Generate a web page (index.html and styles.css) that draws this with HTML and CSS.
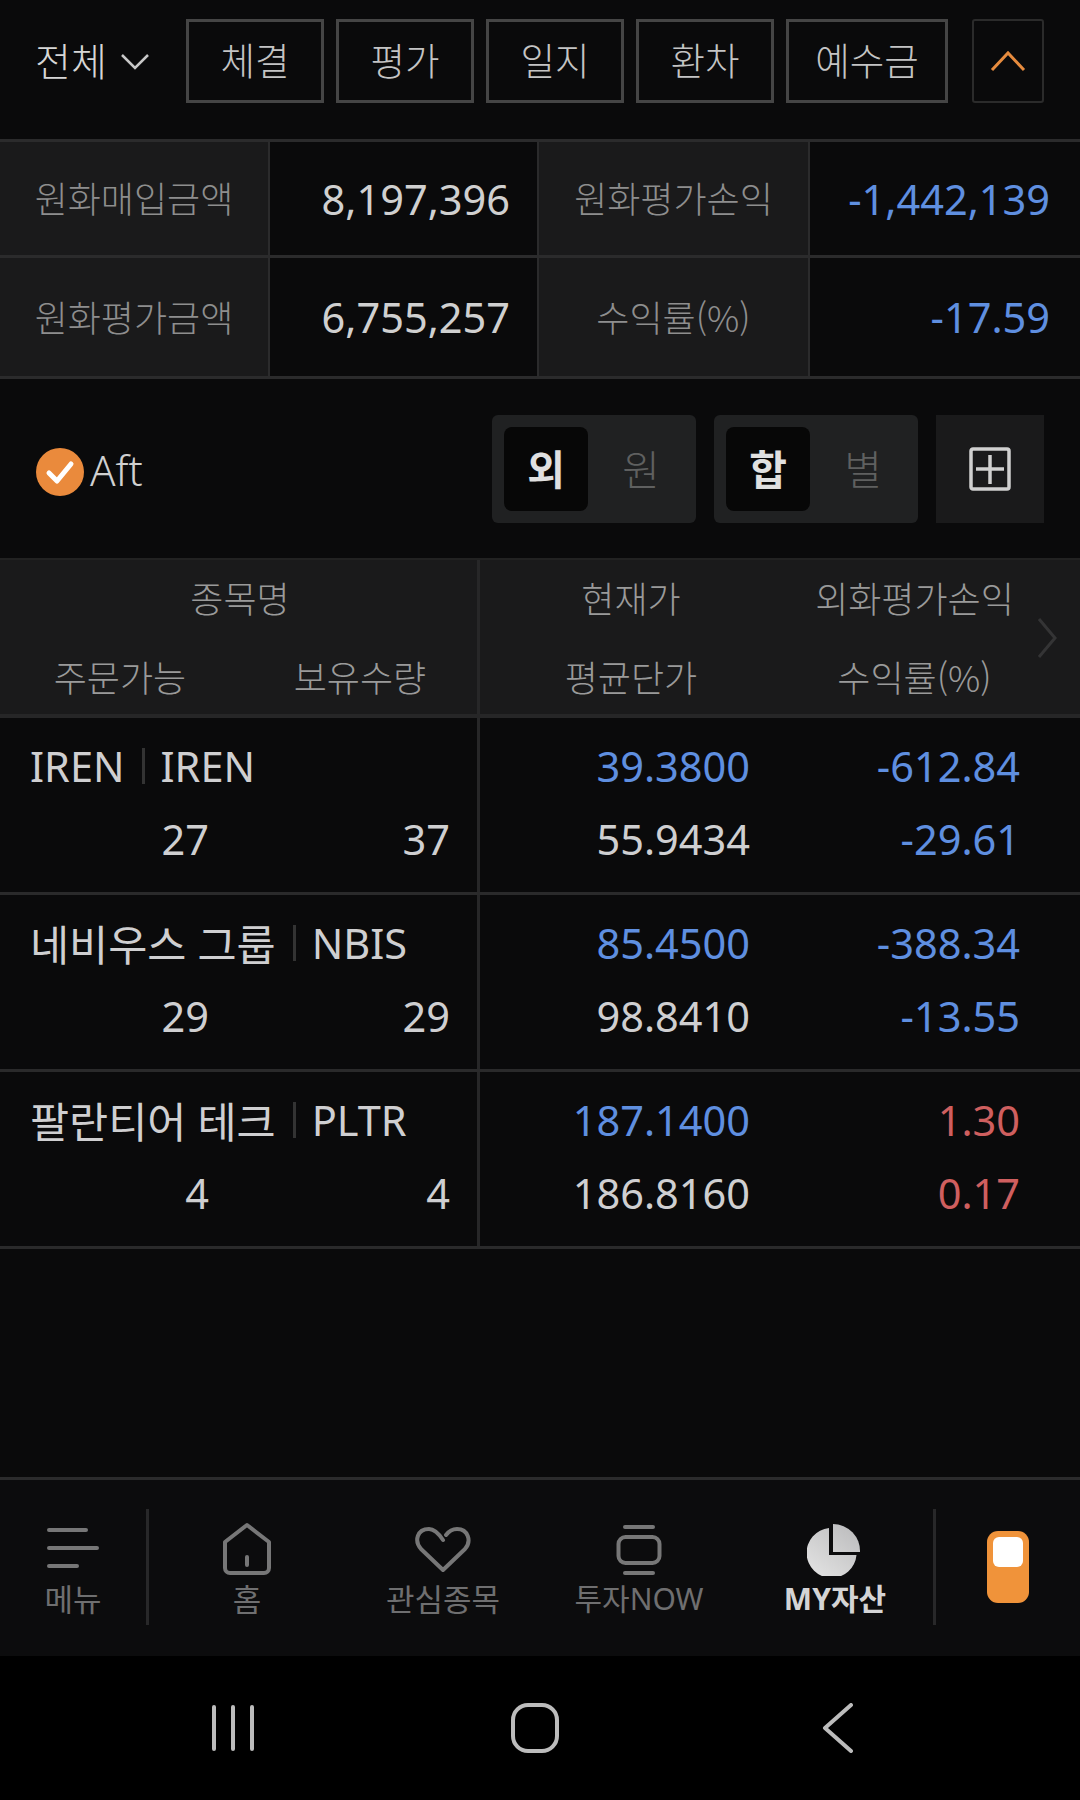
FILE: index.html
```html
<!DOCTYPE html>
<html lang="ko">
<head>
<meta charset="utf-8">
<title>MY자산</title>
<link rel="stylesheet" href="styles.css">
</head>
<body>
<div class="app">
  <header class="top">
    <div class="scope">전체
      <svg class="scope-chev" viewBox="0 0 30 18"><path d="M2 3l13 13L28 3"/></svg>
    </div>
    <div class="tabs">
      <button class="tab w138">체결</button>
      <button class="tab w138">평가</button>
      <button class="tab w138">일지</button>
      <button class="tab w138">환차</button>
      <button class="tab w162">예수금</button>
    </div>
    <button class="collapse"><svg viewBox="0 0 36 22"><path d="M2 20L18 3l16 17"/></svg></button>
  </header>

  <section class="summary">
    <div class="s-label">원화매입금액</div><div class="s-val">8,197,396</div>
    <div class="s-label">원화평가손익</div><div class="s-val blue">-1,442,139</div>
    <div class="s-label">원화평가금액</div><div class="s-val">6,755,257</div>
    <div class="s-label">수익률(%)</div><div class="s-val blue">-17.59</div>
  </section>

  <section class="filters">
    <div class="aft">
      <svg class="check" viewBox="0 0 48 48"><circle cx="24" cy="24" r="24" fill="#ea8a3c"/><path d="M13 25l8 8 14-17" fill="none" stroke="#fff" stroke-width="5" stroke-linecap="round" stroke-linejoin="round"/></svg>
      <span>Aft</span>
    </div>
    <div class="seg"><span class="seg-on">외</span><span class="seg-off">원</span></div>
    <div class="seg"><span class="seg-on">합</span><span class="seg-off">별</span></div>
    <div class="grid-btn"><svg viewBox="0 0 42 44"><rect x="2" y="2" width="38" height="40" rx="2"/><path d="M7 22h28M21 8v29"/></svg></div>
  </section>

  <section class="thead">
    <div class="col-l">
      <div class="th-name">종목명</div>
      <div class="th-qty"><span>주문가능</span><span>보유수량</span></div>
    </div>
    <div class="col-r">
      <div class="th-pair"><span>현재가</span><span>외화평가손익</span></div>
      <div class="th-pair"><span>평균단가</span><span>수익률(%)</span></div>
    </div>
    <svg class="th-chev" viewBox="0 0 20 40"><path d="M2 1l16 19L2 39"/></svg>
  </section>

  <article class="row">
    <div class="col-l">
      <div class="name"><span>IREN</span><i class="bar"></i><span>IREN</span></div>
      <div class="qty"><span>27</span><span>37</span></div>
    </div>
    <div class="col-r">
      <div class="pair"><span class="blue">39.3800</span><span class="blue">-612.84</span></div>
      <div class="pair"><span>55.9434</span><span class="blue">-29.61</span></div>
    </div>
  </article>
  <article class="row">
    <div class="col-l">
      <div class="name"><span class="ko">네비우스 그룹</span><i class="bar"></i><span>NBIS</span></div>
      <div class="qty"><span>29</span><span>29</span></div>
    </div>
    <div class="col-r">
      <div class="pair"><span class="blue">85.4500</span><span class="blue">-388.34</span></div>
      <div class="pair"><span>98.8410</span><span class="blue">-13.55</span></div>
    </div>
  </article>
  <article class="row">
    <div class="col-l">
      <div class="name"><span class="ko">팔란티어 테크</span><i class="bar"></i><span>PLTR</span></div>
      <div class="qty"><span>4</span><span>4</span></div>
    </div>
    <div class="col-r">
      <div class="pair"><span class="blue">187.1400</span><span class="red">1.30</span></div>
      <div class="pair"><span>186.8160</span><span class="red">0.17</span></div>
    </div>
  </article>

  <div class="spacer"></div>

  <nav class="tabbar">
    <div class="nav-item menu">
      <svg viewBox="0 0 56 56"><path d="M4 10h37M4 28h48M4 46h28"/></svg>
      <span>메뉴</span>
    </div>
    <div class="nav-item">
      <svg viewBox="0 0 56 56"><path d="M28 5l22 17v26a5 5 0 0 1-5 5H11a5 5 0 0 1-5-5V22z" stroke-linejoin="round"/><path d="M28 37v8"/></svg>
      <span>홈</span>
    </div>
    <div class="nav-item">
      <svg viewBox="0 0 56 56"><path d="M31 15c3-4 7-6 11-6 11 0 15 12 8 20L28 50 6 29C-1 21 2 9 14 9c5 0 10 5 14 11" stroke-linejoin="round"/></svg>
      <span>관심종목</span>
    </div>
    <div class="nav-item narrow">
      <svg viewBox="0 0 56 56"><path d="M14 7h28M14 53h28"/><rect x="7.500" y="17" width="41" height="26" rx="7"/></svg>
      <span>투자NOW</span>
    </div>
    <div class="nav-item narrow active">
      <svg viewBox="0 0 56 56">
        <defs><linearGradient id="pie" gradientUnits="userSpaceOnUse" x1="48" y1="6" x2="12" y2="52"><stop offset="0" stop-color="#bcbcbd"/><stop offset="1" stop-color="#dedede"/></linearGradient></defs>
        <path class="pie" d="M22 8v27h27.500A25 25 0 1 1 22 8z" fill="url(#pie)"/>
        <path class="pie" d="M26 4a27 27 0 0 1 27 28H26z" fill="url(#pie)"/>
      </svg>
      <span>MY자산</span>
    </div>
    <div class="quick"><div class="quick-body"><div class="quick-win"></div></div></div>
  </nav>

  <footer class="sysbar">
    <svg class="sys-recent" viewBox="0 0 42 46"><path d="M2 2v42M21 2v42M40 2v42"/></svg>
    <svg class="sys-home" viewBox="0 0 48 50"><rect x="2" y="2" width="44" height="46" rx="15"/></svg>
    <svg class="sys-back" viewBox="0 0 32 50"><path d="M29 2L3 25l26 23"/></svg>
  </footer>
</div>
</body>
</html>
```
FILE: styles.css
```css
* { box-sizing: border-box; }
html, body { margin: 0; padding: 0; background: #000; }
body { font-family: "Noto Sans", "Noto Sans CJK KR", sans-serif; color: #d2d2d3; }
svg { display: block; fill: none; }

.app { width: 1080px; height: 1800px; display: flex; flex-direction: column; background: #0a0a0b; overflow: hidden; }

.top { height: 139px; padding: 19px 36px 0 35px; display: flex; align-items: flex-start; flex-shrink: 0; }
.scope { width: 151px; height: 84px; padding-bottom: 5px; display: flex; align-items: center; gap: 13px; font-size: 39px; color: #d6d6d6; font-weight: 300; }
.scope-chev { width: 30px; height: 18px; stroke: #c8c8c8; stroke-width: 2.500px; margin-top: 5px; }
.tabs { display: flex; gap: 12px; }
.tab { height: 84px; padding: 0 0 5px; background: transparent; border: 3px solid #454545; color: #c4c4c4; font: 300 37.500px "Noto Sans", "Noto Sans CJK KR", sans-serif; }
.w138 { width: 138px; }
.w162 { width: 162px; }
.collapse { width: 72px; height: 84px; margin-left: 24px; background: transparent; border: 2px solid #2b2b2b; border-radius: 3px; padding: 0; display: flex; align-items: center; justify-content: center; }
.collapse svg { width: 36px; height: 22px; stroke: #e68b3e; stroke-width: 3px; }

.summary { display: grid; grid-template-columns: 270px 269px 271px 270px; grid-template-rows: 116px 121px; border-top: 3px solid #2b2b2c; flex-shrink: 0; }
.s-label, .s-val { display: flex; align-items: center; border-bottom: 3px solid #2b2b2c; }
.s-label { background: #1a1a1b; justify-content: center; padding-bottom: 3px; font-family: "Noto Sans CJK KR", sans-serif; font-size: 36px; font-weight: 300; color: #8e8e8e; border-right: 2px solid #2b2b2c; }
.s-val { justify-content: flex-end; padding-right: 27px; font-size: 41.500px; color: #d0d0d0; border-right: 2px solid #2b2b2c; }
.s-val:nth-child(4n) { border-right: 0; padding-right: 30px; }
.blue { color: #5f8fe0 !important; }
.red { color: #cf5f5f !important; }

.filters { height: 179px; padding: 36px 36px 0 36px; display: flex; align-items: flex-start; flex-shrink: 0; }
.aft { width: 456px; height: 108px; padding-top: 1px; display: flex; align-items: center; gap: 6px; font-size: 42px; font-weight: 300; color: #d0d0d0; }
.check { width: 48px; height: 48px; margin-top: 4px; }
.seg { width: 204px; height: 108px; margin-right: 18px; padding: 12px; background: #202122; border-radius: 6px; display: flex; font-size: 41px; }
.seg-on { width: 84px; padding-bottom: 4px; background: #070707; border-radius: 8px; display: flex; align-items: center; justify-content: center; font-weight: 700; color: #e0e0e0; }
.seg-off { flex: 1; padding: 0 0 4px 10px; display: flex; align-items: center; justify-content: center; color: #5f6060; font-weight: 300; }
.grid-btn { width: 108px; height: 108px; background: #1a1a1b; display: flex; align-items: center; justify-content: center; }
.grid-btn svg { width: 42px; height: 44px; stroke: #d0d0d0; stroke-width: 3.500px; }

.thead { position: relative; height: 160px; display: flex; background: #1a1a1b; border-top: 2px solid #222; border-bottom: 4px solid #262627; font-family: "Noto Sans CJK KR", sans-serif; flex-shrink: 0; }
.col-l { width: 480px; border-right: 3px solid #272728; flex-shrink: 0; }
.col-r { flex: 1; }
.th-name { height: 74px; padding-left: 3px; display: flex; align-items: center; justify-content: center; font-size: 36px; font-weight: 300; color: #9a9a9a; }
.th-qty { height: 80px; padding-top: 3px; display: grid; grid-template-columns: 240px 240px; font-size: 36px; font-weight: 300; color: #9a9a9a; }
.th-qty span { display: flex; align-items: center; justify-content: center; }
.th-pair { height: 80px; padding-top: 4px; display: grid; grid-template-columns: 302px 265px; font-size: 36px; font-weight: 300; color: #9a9a9a; }
.th-pair span { display: flex; align-items: center; justify-content: center; }
.th-pair:first-child { height: 74px; padding-top: 0; }
.th-chev { position: absolute; right: 23px; top: 58px; width: 20px; height: 40px; stroke: #343435; stroke-width: 3px; }

.row { height: 177px; display: flex; border-bottom: 3px solid #2a2a2b; flex-shrink: 0; }
.name { height: 97px; padding: 0 0 2px 30px; display: flex; align-items: center; font-size: 41.500px; color: #cfcfd1; }
.ko { font-size: 42.500px; }
.bar { width: 3px; height: 36px; margin: 0 16px 0 17px; background: #333; }
.qty { display: grid; grid-template-columns: 209px 241px; font-size: 41.500px; line-height: 48px; color: #cfcfd1; }
.qty span { text-align: right; }
.pair { height: 73px; padding-top: 13px; display: grid; grid-template-columns: 270px 270px; font-size: 41.500px; line-height: 48px; color: #cfcfd1; }
.pair span { text-align: right; }
.col-r .pair:first-child { height: 84px; padding-top: 24px; }

.spacer { flex: 1; }

.tabbar { height: 179px; display: grid; grid-template-columns: 149px repeat(4, 196px) 147px; background: #0c0c0d; border-top: 3px solid #2b2b2c; flex-shrink: 0; padding-top: 29px; }
.nav-item { height: 110px; display: flex; flex-direction: column; align-items: center; justify-content: flex-end; color: #6f6f70; font-size: 31px; line-height: 40px; font-weight: 400; }
.narrow { font-size: 30px; }
.nav-item svg { stroke: #777; stroke-width: 4px; stroke-linecap: round; height: 56px; width: 56px; margin-bottom: 3px; flex-shrink: 0; }
.nav-item .pie { stroke: none; }
.menu { border-right: 3px solid #282829; height: 116px; justify-content: flex-start; padding-top: 11px; }
.active { color: #d4d4d5; font-weight: 700; }
.quick { height: 116px; border-left: 3px solid #282829; display: flex; justify-content: center; padding-top: 22px; }
.quick-body { width: 42px; height: 72px; padding: 6px; background: #f0933a; border-radius: 11px; }
.quick-win { height: 30px; background: #fff; border-radius: 6px; }

.sysbar { height: 144px; background: #000; position: relative; display: grid; grid-template-columns: 212px 43px 256px 48px 263px 32px; align-items: center; padding-bottom: 1px; flex-shrink: 0; }
.sys-recent { grid-column: 2; width: 42px; height: 46px; stroke: #bcbcbc; stroke-width: 4px; stroke-linecap: round; }
.sys-home { grid-column: 4; width: 48px; height: 50px; stroke: #bcbcbc; stroke-width: 4px; }
.sys-back { grid-column: 6; width: 32px; height: 50px; stroke: #bcbcbc; stroke-width: 4px; stroke-linecap: round; stroke-linejoin: round; }
```
